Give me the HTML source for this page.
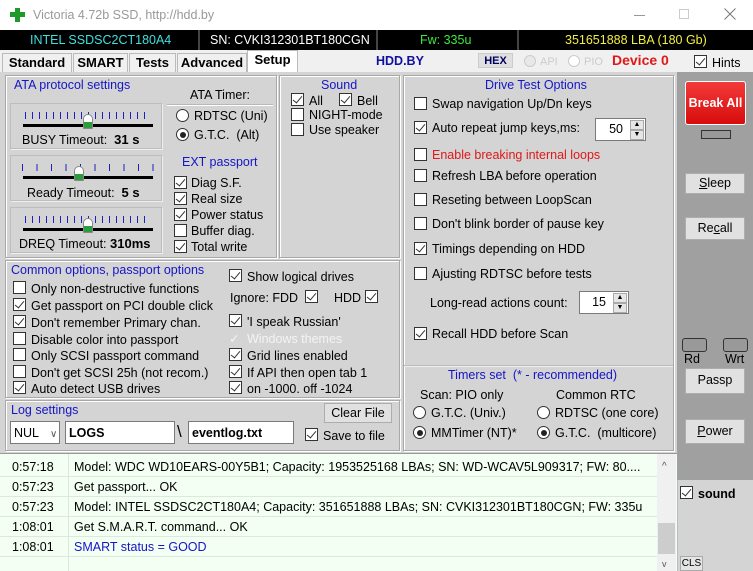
<!DOCTYPE html>
<html><head><meta charset="utf-8"><style>
*{box-sizing:border-box;margin:0;padding:0}
body{width:753px;height:571px;overflow:hidden;background:#d4d4d4;font-family:"Liberation Sans",Tahoma,sans-serif;font-size:12.5px;color:#000;position:relative}
.a{position:absolute;white-space:nowrap;line-height:14px}
.c{position:absolute;width:13px;height:13px;background:#fff;border:1px solid #333}
.c.k::after{content:"";position:absolute;left:3px;top:0px;width:4px;height:8px;border-right:1.4px solid #333;border-bottom:1.4px solid #333;transform:rotate(40deg)}
.r{position:absolute;width:13px;height:13px;border-radius:50%;background:#fff;border:1px solid #333}
.r.k::after{content:"";position:absolute;left:2.5px;top:2.5px;width:6px;height:6px;border-radius:50%;background:#222}
.g{position:absolute;border:1px solid #a8a8a8;box-shadow:inset 1px 1px #fff,1px 1px #fff;background:#d4d4d4}
.b{color:#1515c8}
.btn{position:absolute;background:#e1e1e1;border:1px solid #adadad;text-align:center;line-height:18px}
.tab{position:absolute;top:53px;height:19px;background:#f0f0f0;border:1px solid #bbb;border-bottom:none;font-weight:bold;font-size:13px;text-align:center;line-height:17px}
.sl{position:absolute;border:1px solid #bdbdbd;box-shadow:1px 1px #eee}
.trk{position:absolute;left:12px;top:20px;width:130px;height:3px;background:#000}
.th{position:absolute;width:10px;height:15px;background:linear-gradient(#fff 55%,#2c9c3c 55%);border:1px solid #888;border-radius:5px 5px 1px 1px}
.inp{position:absolute;background:#fff;border:1px solid #7a7a7a}
.spin{position:absolute;background:#fff;border:1px solid #7a7a7a;text-align:right;padding-right:22px}
.spin i{position:absolute;right:1px;width:14px;height:10px;background:#e6e6e6;border:1px solid #aaa;font-style:normal;font-size:7px;line-height:8px;text-align:center}
.row{position:absolute;left:0;width:657px;height:20px;border-bottom:1px solid #dce8dc;line-height:20px}
.row span{position:absolute;left:12px}
.row em{position:absolute;left:74px;font-style:normal}
</style></head><body>
<div style="position:absolute;left:0;top:0;width:753px;height:30px;background:#fff"></div>
<div style="position:absolute;left:15px;top:8px;width:5px;height:14px;background:#1f9a2a"></div>
<div style="position:absolute;left:10px;top:12px;width:15px;height:5px;background:#1f9a2a"></div>
<div class="a" style="left:33px;top:8px;color:#999;font-size:12.5px">Victoria 4.72b SSD, http://hdd.by</div>
<div style="position:absolute;left:634px;top:15px;width:11px;height:1px;background:#999"></div>
<div style="position:absolute;left:679px;top:9px;width:10px;height:10px;border:1px solid #ccc"></div>
<svg style="position:absolute;left:724px;top:8px" width="12" height="12"><path d="M0.5 0.5L11.5 11.5M11.5 0.5L0.5 11.5" stroke="#777" stroke-width="1"/></svg>
<div style="position:absolute;left:0;top:30px;width:753px;height:20px;background:#000"></div>
<div class="a" style="left:30px;top:33px;color:#3fe0e0">INTEL SSDSC2CT180A4</div>
<div style="position:absolute;left:198px;top:30px;width:2px;height:20px;background:#444"></div>
<div class="a" style="left:210px;top:33px;color:#fff">SN: CVKI312301BT180CGN</div>
<div style="position:absolute;left:376px;top:30px;width:2px;height:20px;background:#444"></div>
<div class="a" style="left:420px;top:33px;color:#3ee83e">Fw: 335u</div>
<div style="position:absolute;left:517px;top:30px;width:2px;height:20px;background:#444"></div>
<div class="a" style="left:565px;top:33px;color:#f0f040">351651888 LBA (180 Gb)</div>
<div style="position:absolute;left:0;top:50px;width:753px;height:22px;background:#f0f0f0"></div>
<div class="tab" style="left:2px;width:70px">Standard</div>
<div class="tab" style="left:73px;width:55px">SMART</div>
<div class="tab" style="left:129px;width:47px">Tests</div>
<div class="tab" style="left:177px;width:70px">Advanced</div>
<div class="tab" style="left:247px;top:50px;height:22px;width:51px;background:#fff">Setup</div>
<div class="a" style="left:376px;top:54px;font-weight:bold;color:#1010a0">HDD.BY</div>
<div class="a" style="left:478px;top:53px;width:35px;height:15px;background:#e0e0e0;border:1px solid #ccc;font-weight:bold;font-size:11px;text-align:center;color:#000060">HEX</div>
<div style="position:absolute;left:524px;top:55px;width:12px;height:12px;border-radius:50%;background:#e8e8e8;border:1px solid #ccc"></div>
<div class="a" style="left:540px;top:55px;color:#ccc;font-size:11px">API</div>
<div style="position:absolute;left:568px;top:55px;width:12px;height:12px;border-radius:50%;background:#fff;border:1px solid #ccc"></div>
<div class="a" style="left:584px;top:55px;color:#ccc;font-size:11px">PIO</div>
<div class="a" style="left:612px;top:53px;color:#e01818;font-weight:bold;font-size:14px">Device 0</div>
<span class="c k" style="left:694px;top:55px"></span><div class="a" style="left:712px;top:56px">Hints</div>
<div style="position:absolute;left:677px;top:72px;width:76px;height:408px;background:#a0a0a0"></div>
<div class="g" style="left:5px;top:75px;width:272px;height:183px"></div>
<div class="a b" style="left:14px;top:78px">ATA protocol settings</div>
<div class="sl" style="left:10px;top:103px;width:152px;height:46px">
 <div style="position:absolute;left:14px;top:8px;width:126px;height:7px;background:repeating-linear-gradient(90deg,#2020c0 0 1px,transparent 1px 7px)"></div>
 <div class="trk"></div><div class="th" style="left:72px;top:10px"></div>
 <div class="a" style="left:11px;top:29px">BUSY Timeout: &nbsp;<b style="font-size:13px">31 s</b></div></div>
<div class="sl" style="left:10px;top:155px;width:152px;height:46px">
 <div style="position:absolute;left:11px;top:8px;width:140px;height:7px;background:repeating-linear-gradient(90deg,#2020c0 0 1px,transparent 1px 14.5px)"></div>
 <div class="trk"></div><div class="th" style="left:63px;top:10px"></div>
 <div class="a" style="left:16px;top:30px">Ready Timeout: &nbsp;<b style="font-size:13px">5 s</b></div></div>
<div class="sl" style="left:10px;top:207px;width:152px;height:46px">
 <div style="position:absolute;left:14px;top:8px;width:126px;height:7px;background:repeating-linear-gradient(90deg,#2020c0 0 1px,transparent 1px 7px)"></div>
 <div class="trk"></div><div class="th" style="left:72px;top:10px"></div>
 <div class="a" style="left:8px;top:29px">DREQ Timeout: <b style="font-size:13px">310ms</b></div></div>
<div class="a" style="left:190px;top:88px">ATA Timer:</div>
<div style="position:absolute;left:167px;top:104px;width:106px;height:1px;background:#b8b8b8;box-shadow:0 1px #fff"></div>
<span class="r" style="left:176px;top:109px"></span><div class="a" style="left:194px;top:109px">RDTSC (Uni)</div>
<span class="r k" style="left:176px;top:128px"></span><div class="a" style="left:194px;top:128px">G.T.C. &nbsp;(Alt)</div>
<div class="a b" style="left:182px;top:155px">EXT passport</div>
<span class="c k" style="left:174px;top:176px"></span><div class="a" style="left:191px;top:176px">Diag S.F.</div>
<span class="c k" style="left:174px;top:192px"></span><div class="a" style="left:191px;top:192px">Real size</div>
<span class="c k" style="left:174px;top:208px"></span><div class="a" style="left:191px;top:208px">Power status</div>
<span class="c" style="left:174px;top:224px"></span><div class="a" style="left:191px;top:224px">Buffer diag.</div>
<span class="c k" style="left:174px;top:240px"></span><div class="a" style="left:191px;top:240px">Total write</div>
<div class="g" style="left:279px;top:75px;width:121px;height:183px"></div>
<div class="a b" style="left:321px;top:78px">Sound</div>
<span class="c k" style="left:291px;top:93px"></span><div class="a" style="left:309px;top:94px">All</div>
<span class="c k" style="left:339px;top:93px"></span><div class="a" style="left:357px;top:94px">Bell</div>
<span class="c" style="left:291px;top:108px"></span><div class="a" style="left:309px;top:108px">NIGHT-mode</div>
<span class="c" style="left:291px;top:123px"></span><div class="a" style="left:309px;top:123px">Use speaker</div>
<div class="g" style="left:403px;top:75px;width:271px;height:376px"></div>
<div class="a b" style="left:485px;top:78px">Drive Test Options</div>
<span class="c" style="left:414px;top:97px"></span><div class="a" style="left:432px;top:97px">Swap navigation Up/Dn keys</div>
<span class="c k" style="left:414px;top:121px"></span><div class="a" style="left:432px;top:121px">Auto repeat jump keys,ms:</div>
<div class="spin" style="left:595px;top:118px;width:51px;height:23px;line-height:21px">50<i style="top:1px">▲</i><i style="top:11px">▼</i></div>
<span class="c" style="left:414px;top:148px"></span><div class="a" style="left:432px;top:148px;color:#e01818">Enable breaking internal loops</div>
<span class="c" style="left:414px;top:169px"></span><div class="a" style="left:432px;top:169px">Refresh LBA before operation</div>
<span class="c" style="left:414px;top:193px"></span><div class="a" style="left:432px;top:193px">Reseting between LoopScan</div>
<span class="c" style="left:414px;top:217px"></span><div class="a" style="left:432px;top:217px">Don't blink border of pause key</div>
<span class="c k" style="left:414px;top:242px"></span><div class="a" style="left:432px;top:242px">Timings depending on HDD</div>
<span class="c" style="left:414px;top:267px"></span><div class="a" style="left:432px;top:267px">Ajusting RDTSC before tests</div>
<div class="a" style="left:430px;top:296px">Long-read actions count:</div>
<div class="spin" style="left:579px;top:291px;width:50px;height:23px;line-height:21px">15<i style="top:1px">▲</i><i style="top:11px">▼</i></div>
<span class="c k" style="left:414px;top:327px"></span><div class="a" style="left:432px;top:327px">Recall HDD before Scan</div>
<div style="position:absolute;left:404px;top:365px;width:269px;height:1px;background:#bbb;box-shadow:0 1px #eee"></div>
<div class="a b" style="left:448px;top:368px">Timers set &nbsp;(* - recommended)</div>
<div class="a" style="left:420px;top:388px">Scan: PIO only</div>
<div class="a" style="left:556px;top:388px">Common RTC</div>
<span class="r" style="left:413px;top:406px"></span><div class="a" style="left:431px;top:406px">G.T.C. (Univ.)</div>
<span class="r k" style="left:413px;top:426px"></span><div class="a" style="left:431px;top:426px">MMTimer (NT)*</div>
<span class="r" style="left:537px;top:406px"></span><div class="a" style="left:555px;top:406px">RDTSC (one core)</div>
<span class="r k" style="left:537px;top:426px"></span><div class="a" style="left:555px;top:426px">G.T.C. &nbsp;(multicore)</div>
<div class="g" style="left:5px;top:260px;width:395px;height:138px"></div>
<div class="a b" style="left:11px;top:263px">Common options, passport options</div>
<span class="c" style="left:13px;top:281px"></span><div class="a" style="left:31px;top:282px">Only non-destructive functions</div>
<span class="c k" style="left:13px;top:298px"></span><div class="a" style="left:31px;top:299px">Get passport on PCI double click</div>
<span class="c k" style="left:13px;top:315px"></span><div class="a" style="left:31px;top:316px">Don't remember Primary chan.</div>
<span class="c" style="left:13px;top:332px"></span><div class="a" style="left:31px;top:333px">Disable color into passport</div>
<span class="c" style="left:13px;top:348px"></span><div class="a" style="left:31px;top:349px">Only SCSI passport command</div>
<span class="c" style="left:13px;top:365px"></span><div class="a" style="left:31px;top:366px">Don't get SCSI 25h (not recom.)</div>
<span class="c k" style="left:13px;top:381px"></span><div class="a" style="left:31px;top:382px">Auto detect USB drives</div>
<span class="c k" style="left:229px;top:269px"></span><div class="a" style="left:247px;top:270px">Show logical drives</div>
<div class="a" style="left:230px;top:291px">Ignore: FDD</div><span class="c k" style="left:305px;top:290px"></span>
<div class="a" style="left:334px;top:291px">HDD</div><span class="c k" style="left:365px;top:290px"></span>
<span class="c k" style="left:229px;top:314px"></span><div class="a" style="left:247px;top:315px">'I speak Russian'</div>
<div class="a" style="left:229px;top:332px;color:#f4f4f4">✓</div><div class="a" style="left:247px;top:332px;color:#f4f4f4">Windows themes</div>
<span class="c k" style="left:229px;top:348px"></span><div class="a" style="left:247px;top:349px">Grid lines enabled</div>
<span class="c k" style="left:229px;top:365px"></span><div class="a" style="left:247px;top:366px">If API then open tab 1</div>
<span class="c k" style="left:229px;top:381px"></span><div class="a" style="left:247px;top:382px">on -1000. off -1024</div>
<div class="g" style="left:5px;top:400px;width:395px;height:51px"></div>
<div class="a b" style="left:11px;top:403px">Log settings</div>
<div class="inp" style="left:10px;top:421px;width:50px;height:23px;padding:4px 0 0 3px">NUL <span style="color:#555;margin-left:8px;font-size:10px">∨</span></div>
<div class="inp" style="left:65px;top:421px;width:110px;height:23px;padding:4px 0 0 3px;font-weight:bold">LOGS</div>
<div class="a" style="left:177px;top:422px;font-size:17px;line-height:20px">\</div>
<div class="inp" style="left:188px;top:421px;width:106px;height:23px;padding:4px 0 0 3px;font-weight:bold">eventlog.txt</div>
<div class="btn" style="left:324px;top:403px;width:68px;height:20px">Clear File</div>
<span class="c k" style="left:305px;top:428px"></span><div class="a" style="left:323px;top:429px">Save to file</div>
<div style="position:absolute;left:685px;top:81px;width:61px;height:44px;background:linear-gradient(#f23a3a,#d80c0c);border:1px solid #fff;border-radius:3px;color:#fff;font-weight:bold;text-align:center;line-height:42px">Break All</div>
<div style="position:absolute;left:701px;top:130px;width:30px;height:9px;background:#999;border:1px solid #333"></div>
<div class="btn" style="left:685px;top:173px;width:60px;height:21px;line-height:19px"><u>S</u>leep</div>
<div class="btn" style="left:685px;top:217px;width:60px;height:23px;line-height:21px">Re<u>c</u>all</div>
<div style="position:absolute;left:682px;top:338px;width:25px;height:14px;border:1px solid #333;border-radius:3px;background:#999"></div>
<div style="position:absolute;left:723px;top:338px;width:25px;height:14px;border:1px solid #333;border-radius:3px;background:#999"></div>
<div class="a" style="left:684px;top:352px">Rd</div><div class="a" style="left:725px;top:352px">Wrt</div>
<div class="btn" style="left:685px;top:368px;width:60px;height:26px;line-height:22px">Passp</div>
<div class="btn" style="left:685px;top:419px;width:60px;height:25px;line-height:23px"><u>P</u>ower</div>
<div style="position:absolute;left:0;top:453px;width:677px;height:118px;background:#f2fff2;border-top:1px solid #999"></div>
<div style="position:absolute;left:68px;top:454px;width:1px;height:117px;background:#dce8dc"></div>
<div class="row" style="top:457px"><span>0:57:18</span><em>Model: WDC WD10EARS-00Y5B1; Capacity: 1953525168 LBAs; SN: WD-WCAV5L909317; FW: 80....</em></div>
<div class="row" style="top:477px"><span>0:57:23</span><em>Get passport... OK</em></div>
<div class="row" style="top:497px"><span>0:57:23</span><em>Model: INTEL SSDSC2CT180A4; Capacity: 351651888 LBAs; SN: CVKI312301BT180CGN; FW: 335u</em></div>
<div class="row" style="top:517px"><span>1:08:01</span><em>Get S.M.A.R.T. command... OK</em></div>
<div class="row" style="top:537px"><span>1:08:01</span><em style="color:#1515c8">SMART status = GOOD</em></div>
<div style="position:absolute;left:657px;top:454px;width:19px;height:117px;background:#f0f0f0"></div>
<div style="position:absolute;left:658px;top:523px;width:17px;height:31px;background:#cdcdcd"></div>
<div class="a" style="left:662px;top:460px;font-size:10px;color:#555">^</div>
<div class="a" style="left:662px;top:557px;font-size:9px;color:#555">v</div>
<div style="position:absolute;left:677px;top:480px;width:76px;height:91px;background:#d4d4d4;border-left:1px solid #bbb"></div>
<span class="c k" style="left:680px;top:486px"></span><div class="a" style="left:698px;top:487px;font-weight:bold">sound</div>
<div style="position:absolute;left:680px;top:556px;width:23px;height:15px;background:#e4e4e4;border:1px solid #aaa;font-size:10px;line-height:13px;text-align:center">CLS</div>
</body></html>
